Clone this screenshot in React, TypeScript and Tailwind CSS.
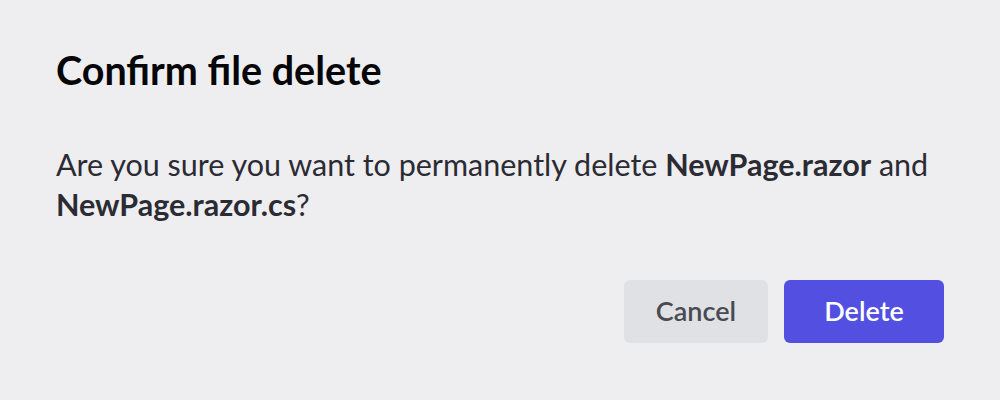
export default function App() {
  return (
    <div
      className="w-[1000px] h-[400px] bg-[#eeeef1] px-14 pt-[46px] flex flex-col"
      style={{ fontFamily: 'Lato, "Noto Sans", sans-serif' }}
    >
      <h2 className="text-[39.5px] leading-[48px] font-bold text-[#060608]">
        Confirm file delete
      </h2>
      <p className="mt-[50px] text-[30.5px] leading-[40px] text-[#2b2b33]">
        Are you sure you want to permanently delete{' '}
        <strong className="font-bold">NewPage.razor</strong> and{' '}
        <strong className="font-bold">NewPage.razor.cs</strong>?
      </p>
      <div className="mt-[56px] flex justify-end gap-4">
        <button className="w-[144px] h-[63px] rounded-md bg-[#e0e1e5] text-[27px] font-semibold text-[#4a4a52]">
          Cancel
        </button>
        <button className="w-[160px] h-[63px] rounded-md bg-[#524fe1] text-[27px] font-semibold text-white">
          Delete
        </button>
      </div>
    </div>
  );
}
